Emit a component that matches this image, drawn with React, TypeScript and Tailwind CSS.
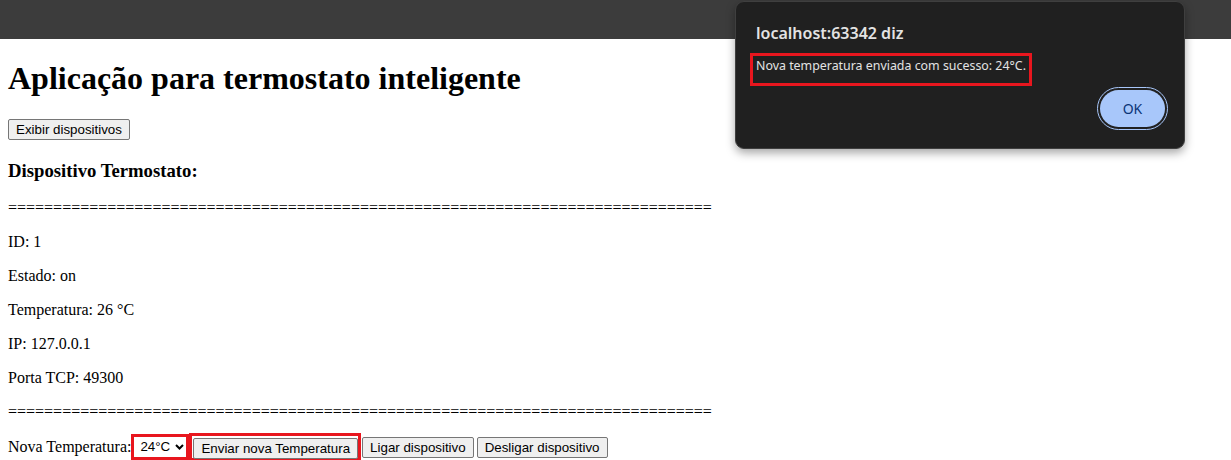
import React from "react"

const serif = "font-['Liberation_Serif','Times_New_Roman',serif]"
const sans = "font-['Liberation_Sans',Arial,sans-serif]"

const separator = "=".repeat(78)

const device = [
  "ID: 1",
  "Estado: on",
  "Temperatura: 26 °C",
  "IP: 127.0.0.1",
  "Porta TCP: 49300"
]

const NativeButton = ({
  label,
  className = ""
}: {
  label: string
  className?: string
}) => (
  <button
    className={`${sans} h-[21px] px-[7px] text-[13.333px] leading-none text-black bg-[#efefef] border border-[#767676] rounded-[2px] ${className}`}
  >
    {label}
  </button>
)

const AlertDialog = () => (
  <div className="absolute left-[735px] top-[1px] w-[450px] h-[148px] rounded-[9px] bg-[#202020] border border-[#3f3f3f] shadow-[0_4px_10px_rgba(0,0,0,0.35)] font-['Noto_Sans','Open_Sans',sans-serif] flex flex-col">
    <div className="pl-[20px] pt-[20px] text-[16px] leading-[22px] font-semibold text-[#e3e3e3]">
      localhost:63342 diz
    </div>
    <div className="ml-[14px] mt-[9px] w-[282px] h-[33px] border-[3px] border-[#e8161e] pl-[3px] pt-[1px] text-[12.4px] leading-[18px] whitespace-nowrap text-[#e3e3e3]">
      Nova temperatura enviada com sucesso: 24°C.
    </div>
    <div className="flex justify-end pr-[16px] mt-[1px]">
      <div className="w-[71px] h-[43px] rounded-full border border-[#a8c7fa] p-[2px]">
        <div className="w-full h-full rounded-full bg-[#a8c7fa] flex items-center justify-center text-[14px] text-[#0a3476]">
          OK
        </div>
      </div>
    </div>
  </div>
)

export default function App() {
  return (
    <div className={`relative w-[1231px] h-[460px] overflow-hidden bg-white text-black ${serif}`}>
      <div className="h-[39px] bg-[#3c3c3c]" />
      <div className="px-2 text-[16px] leading-[18px]">
        <h1 className="text-[32px] font-bold my-[21.44px] leading-[normal]">
          Aplicação para termostato inteligente
        </h1>
        <div className="h-[22px]">
          <NativeButton label="Exibir dispositivos" />
        </div>
        <h3 className="text-[18.72px] font-bold mt-[19px] mb-[17.5px] leading-[normal]">
          Dispositivo Termostato:
        </h3>
        <p className="my-4">{separator}</p>
        {device.map((line) => (
          <p key={line} className="my-4">
            {line}
          </p>
        ))}
        <p className="my-4">{separator}</p>
        <div className="flex items-center h-[20px] mt-[16px]">
          <span>Nova Temperatura:</span>
          <div
            className={`${sans} w-[58px] h-[26px] border-[3px] border-[#e8161e] bg-white flex items-center pl-[6px] text-[13.333px]`}
          >
            <span>24°C</span>
            <svg
              className="ml-[5px]"
              width="9"
              height="6"
              viewBox="0 0 9 6"
            >
              <path
                d="M1 1 L4.5 4.5 L8 1"
                fill="none"
                stroke="#000"
                strokeWidth="2"
              />
            </svg>
          </div>
          <span className="h-[28px] border-[3px] border-[#e8161e] pl-[1px] pt-[2px] flex items-start">
            <NativeButton label="Enviar nova Temperatura" />
          </span>
          <NativeButton label="Ligar dispositivo" className="ml-[1px]" />
          <NativeButton label="Desligar dispositivo" className="ml-[3px]" />
        </div>
      </div>
      <AlertDialog />
    </div>
  )
}
